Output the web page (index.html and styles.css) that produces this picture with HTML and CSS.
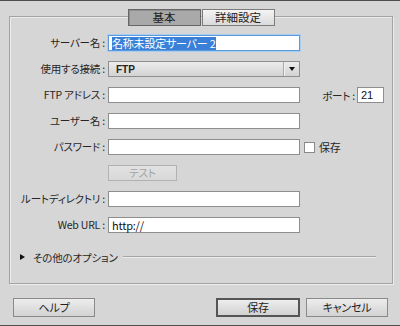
FILE: index.html
```html
<!DOCTYPE html>
<html lang="ja">
<head>
<meta charset="utf-8">
<link rel="stylesheet" href="styles.css">
</head>
<body>
<div class="page">
  <div class="topline"></div>
  <div class="group">
    <div class="tabs">
      <div class="tab active">基本</div>
      <div class="tab">詳細設定</div>
    </div>
    <div class="form">
      <div class="row">
        <label class="lbl">サーバー名 :</label>
        <div class="input focus"><span class="sel">名称未設定サーバー 2</span></div>
      </div>
      <div class="row">
        <label class="lbl">使用する接続 :</label>
        <div class="select"><span class="sel-text">FTP</span><span class="sel-btn"><span class="arrow"></span></span></div>
      </div>
      <div class="row">
        <label class="lbl">FTP アドレス :</label>
        <div class="input"></div>
        <label class="port-lbl">ポート :</label>
        <div class="input port">21</div>
      </div>
      <div class="row">
        <label class="lbl">ユーザー名 :</label>
        <div class="input"></div>
      </div>
      <div class="row">
        <label class="lbl">パスワード :</label>
        <div class="input"></div>
        <span class="check"></span>
        <span class="check-lbl">保存</span>
      </div>
      <div class="row">
        <span class="lbl"></span>
        <div class="btn-test">テスト</div>
      </div>
      <div class="row">
        <label class="lbl">ルートディレクトリ :</label>
        <div class="input"></div>
      </div>
      <div class="row">
        <label class="lbl">Web URL :</label>
        <div class="input">http://</div>
      </div>
    </div>
    <div class="more">
      <span class="tri"></span>
      <span class="more-text">その他のオプション</span>
      <span class="more-line"></span>
    </div>
  </div>
  <div class="footer">
    <div class="btn help">ヘルプ</div>
    <div class="spacer"></div>
    <div class="btn save">保存</div>
    <div class="btn cancel">キャンセル</div>
  </div>
  <div class="bottomline"></div>
</div>
</body>
</html>
```
FILE: styles.css
```css
* { box-sizing: border-box; }
html, body { margin: 0; padding: 0; }
body {
  width: 400px;
  height: 326px;
  background: #d6d6d6;
  font-family: "Noto Sans CJK JP", "Noto Sans", sans-serif;
  font-size: 10.5px;
  letter-spacing: -0.2px;
  font-feature-settings: "palt";
  color: #262626;
  overflow: hidden;
}
.page {
  display: flex;
  flex-direction: column;
  height: 326px;
}
.topline { height: 1px; background: #4e4e4e; }
.bottomline { height: 1px; background: #4e4e4e; margin-top: auto; }

.group {
  margin: 15px 0 0 9px;
  width: 384px;
  height: 268px;
  border: 1px solid #a3a3a3;
  box-shadow: inset 1px 1px 0 #ececec, 1px 1px 0 #ececec;
  display: flex;
  flex-direction: column;
}
.tabs {
  display: flex;
  justify-content: center;
  gap: 1px;
  margin-top: -8px;
}
.tab {
  width: 73px;
  height: 17px;
  line-height: 15px;
  text-align: center;
  border: 1px solid #7c7c7c;
  background: linear-gradient(#f4f4f4, #dadada);
  font-size: 11.5px;
  letter-spacing: 0;
  color: #222;
}
.tab.active {
  background: #a9a9a9;
  border-color: #666;
  box-shadow: inset 1px 1px 0 #8e8e8e;
}

.form {
  margin-top: 9px;
  display: flex;
  flex-direction: column;
  gap: 10px;
}
.row {
  display: flex;
  align-items: center;
  height: 16px;
}
.lbl {
  width: 95px;
  flex-shrink: 0;
  margin-right: 3px;
  text-align: right;
  white-space: nowrap;
  line-height: 16px;
}
.input {
  width: 192px;
  flex-shrink: 0;
  height: 16px;
  background: #fff;
  border: 1px solid #8e8e8e;
  padding: 0 3px;
  line-height: 14px;
  font-size: 11px;
  color: #111;
  white-space: nowrap;
}
.input.focus {
  border-color: #5a9ad8;
  box-shadow: 0 0 0 1px #a9cdf0;
}
.sel {
  background: #3a7fd8;
  color: #fff;
  display: inline-block;
  line-height: 13px;
}
.select {
  width: 192px;
  height: 16px;
  border: 1px solid #8e8e8e;
  background: linear-gradient(#ececec, #d3d3d3);
  display: flex;
  align-items: center;
}
.sel-text { flex: 1; padding-left: 7px; font-size: 10px; font-family: "Liberation Sans", sans-serif; font-weight: bold; color: #222; letter-spacing: 0; }
.sel-btn {
  width: 16px;
  height: 14px;
  border-left: 1px solid #a8a8a8;
  box-shadow: inset 1px 0 0 #f2f2f2;
  display: flex;
  align-items: center;
  justify-content: center;
}
.arrow {
  width: 0; height: 0;
  border-left: 3px solid transparent;
  border-right: 3px solid transparent;
  border-top: 4px solid #111;
}
.port-lbl {
  width: 55px;
  text-align: right;
  margin-right: 2px;
  white-space: nowrap;
}
.input.port { width: 27px; padding: 0 3px; font-family: "Liberation Sans", sans-serif; font-size: 11px; letter-spacing: 0; }
.check {
  width: 11px; height: 11px;
  border: 1px solid #8a8a8a;
  background: #fff;
  margin-left: 4px;
}
.check-lbl { margin-left: 4px; font-size: 11px; }
.btn-test {
  width: 69px;
  height: 16px;
  border: 1px solid #b2b2b2;
  background: linear-gradient(#e2e2e2, #d8d8d8);
  color: #a3a3a3;
  text-align: center;
  line-height: 14px;
}
.more {
  margin-top: 17px;
  display: flex;
  align-items: center;
  height: 14px;
  padding-left: 10px;
}
.tri {
  width: 0; height: 0;
  border-top: 3.5px solid transparent;
  border-bottom: 3.5px solid transparent;
  border-left: 5px solid #111;
}
.more-text { margin-left: 8px; white-space: nowrap; flex-shrink: 0; }
.more-line {
  flex: 1;
  margin: 0 16px 0 5px;
  height: 2px;
  border-top: 1px solid #a5a5a5;
  border-bottom: 1px solid #ececec;
}

.footer {
  display: flex;
  margin-top: 14px;
  padding: 0 12px 0 13px;
  gap: 6px;
}
.spacer { flex: 1; }
.btn {
  height: 19px;
  border: 1px solid #8a8a8a;
  background: linear-gradient(#ededed, #d2d2d2);
  text-align: center;
  line-height: 17px;
  color: #222;
  font-size: 11px;
}
.help { width: 82px; }
.save { width: 84px; border: 2px solid #555; line-height: 15px; }
.cancel { width: 82px; }
```
